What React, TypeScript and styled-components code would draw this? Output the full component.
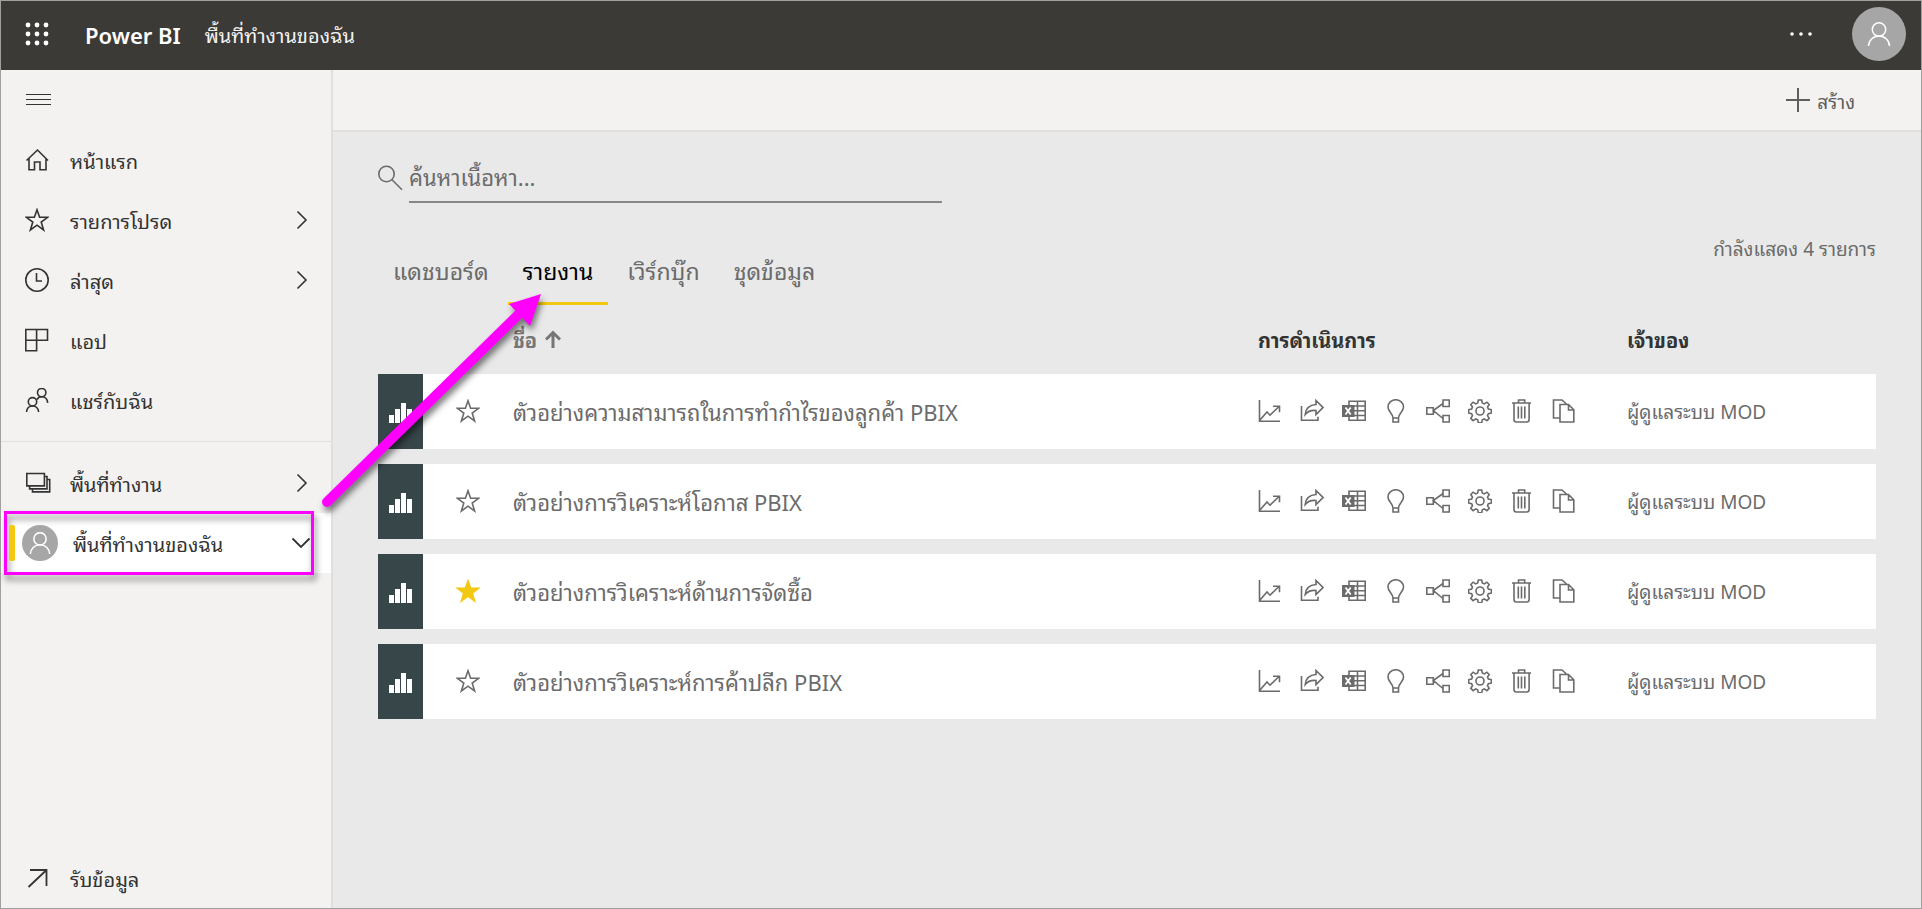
import React from "react";
import styled, { createGlobalStyle } from "styled-components";

const GlobalStyle = createGlobalStyle`
  *, *::before, *::after { box-sizing: border-box; }
  body {
    margin: 0;
    background: #e9e9e9;
    color: #333;
    font-family: "Noto Sans", "Noto Sans Thai Looped", "Loma", sans-serif;
    font-size: 20px;
    line-height: 28px;
  }
  button, input { font: inherit; color: inherit; }
  button { border: 0; padding: 0; background: none; cursor: pointer; }
  svg { display: block; flex: none; }
`;

const Page = styled.div`
  position: relative;
  min-height: 100vh;
  display: flex;
  flex-direction: column;
  border: 1px solid #a0a0a0;
`;

const Header = styled.header`
  display: flex;
  align-items: center;
  height: 69px;
  padding: 0 15px 3px 24px;
  background: #3b3a37;
  color: #fff;
`;

const Brand = styled.a`
  margin: 0 24px 0 36px;
  padding-top: 2px;
  color: #fff;
  font-size: 22px;
  font-weight: 600;
  text-decoration: none;
`;

const HeaderTitle = styled.span`
  flex: 1;
  padding-top: 3px;
  color: #f3f2f1;
`;

const IconButton = styled.button`
  display: flex;
  align-items: center;
  justify-content: center;
`;

const Avatar = styled.span<{ $size: number }>`
  display: flex;
  flex: none;
  align-items: center;
  justify-content: center;
  width: ${p => p.$size}px;
  height: ${p => p.$size}px;
  border-radius: 50%;
  background: #a6a6a6;
  color: #fff;
`;

const HeaderActions = styled.div`
  display: flex;
  align-items: center;
  gap: 39px;
`;

const Body = styled.div`
  flex: 1;
  display: flex;
`;

const Sidebar = styled.nav`
  flex: none;
  display: flex;
  flex-direction: column;
  width: 332px;
  border-right: 2px solid #e0dfde;
  background: #f3f2f1;
`;

const MenuButton = styled(IconButton)`
  width: 75px;
  height: 60px;
`;

const NavLink = styled.a<{ $active?: boolean }>`
  position: relative;
  display: flex;
  align-items: center;
  height: 60px;
  padding: 0 ${p => (p.$active ? 20 : 23)}px 0 ${p => (p.$active ? 21 : 24)}px;
  background: ${p => (p.$active ? "#fff" : "none")};
  color: #333;
  text-decoration: none;
  ${p => p.$active && `
    &::before {
      content: "";
      position: absolute;
      z-index: 2;
      left: 8px;
      top: 12px;
      width: 6px;
      height: 36px;
      border-radius: 2px;
      background: #f2c811;
    }
  `}
`;

const NavIcon = styled.span<{ $wide?: boolean }>`
  display: flex;
  width: ${p => (p.$wide ? 51 : 45)}px;
`;

const NavLabel = styled.span`
  flex: 1;
  padding-top: 3px;
`;

const NavGroup = styled.div<{ $bordered?: boolean }>`
  padding: ${p => (p.$bordered ? "11px 0 0" : "0 0 11px")};
  ${p => p.$bordered && "border-top: 1px solid #e0dfde;"}
`;

const NavFooter = styled.div`
  margin-top: auto;
`;

const Callout = styled.span`
  position: absolute;
  z-index: 1;
  left: 3px;
  top: -2px;
  right: 17px;
  height: 64px;
  border: 3px solid #ff00ff;
  filter: drop-shadow(2px 5px 3px rgba(0, 0, 0, 0.5));
  pointer-events: none;
`;

const Main = styled.main`
  flex: 1;
  min-width: 0;
`;

const Toolbar = styled.div`
  display: flex;
  align-items: center;
  justify-content: flex-end;
  height: 62px;
  padding-right: 66px;
  border-bottom: 2px solid #e0dfde;
  background: #f3f2f1;
`;

const CreateButton = styled.button`
  display: flex;
  align-items: center;
  gap: 6px;
  color: #605e5c;
  font-size: 19px;
`;

const CreateLabel = styled.span`
  padding-top: 3px;
`;

const Content = styled.div`
  padding: 26px 45px 0;
`;

const Search = styled.label`
  display: flex;
  gap: 6px;
  width: 564px;
  max-width: 100%;
  color: #6b6b6b;
  svg { margin-top: 7px; }
`;

const SearchInput = styled.input`
  flex: 1;
  min-width: 0;
  height: 45px;
  padding: 0 0 5px;
  border: 0;
  border-bottom: 2px solid #858886;
  outline: 0;
  background: none;
  font-size: 22px;
  &::placeholder { color: #6b6b6b; opacity: 1; }
`;

const TabRow = styled.div`
  display: flex;
  align-items: flex-start;
  justify-content: space-between;
  margin-top: 32px;
`;

const Tabs = styled.div`
  display: flex;
  gap: 4px;
`;

const Tab = styled.button<{ $active?: boolean }>`
  height: 70px;
  padding: 16px 15px 11px;
  border-bottom: 3px solid ${p => (p.$active ? "#f2c811" : "transparent")};
  color: ${p => (p.$active ? "#000" : "#6b6b6b")};
  font-size: 23px;
  line-height: 40px;
`;

const Count = styled.span`
  color: #6b6b6b;
  font-size: 19px;
`;

const Table = styled.table`
  width: 100%;
  table-layout: fixed;
  border-collapse: separate;
  border-spacing: 0 15px;
  margin-top: 4px;
`;

const Col = styled.col<{ $w?: number }>`
  ${p => p.$w && `width: ${p.$w}px;`}
`;

const HeadCell = styled.th<{ $muted?: boolean }>`
  height: 35px;
  padding: 3px 0 0;
  text-align: left;
  vertical-align: top;
  font-weight: 700;
  color: ${p => (p.$muted ? "#767676" : "#333")};
`;

const SortButton = styled.button`
  display: flex;
  align-items: center;
  gap: 8px;
  font-weight: 700;
  svg { margin-bottom: 5px; }
`;

const Cell = styled.td<{ $size?: number }>`
  height: 75px;
  padding: 0;
  background: #fff;
  color: #6b6b6b;
  font-size: ${p => p.$size || 19}px;
`;

const TypeCell = styled(Cell)`
  background: #374649;
  color: #fff;
  svg { margin: 2px auto 0; }
`;

const StarButton = styled(IconButton)<{ $on?: boolean }>`
  width: 100%;
  padding-bottom: 2px;
  color: ${p => (p.$on ? "#f2c811" : "#6b6b6b")};
`;

const ReportLink = styled.a`
  color: inherit;
  text-decoration: none;
`;

const Actions = styled.div`
  display: flex;
  gap: 18px;
  padding-bottom: 2px;
`;

const Arrow = styled.svg`
  position: absolute;
  z-index: 2;
  left: 310px;
  top: 280px;
  overflow: visible;
  filter: drop-shadow(2px 5px 3px rgba(0, 0, 0, 0.5));
  pointer-events: none;
`;

type IconProps = { w?: number; h?: number; sw?: number; fill?: string; children: React.ReactNode };
const Icon = ({ w = 24, h = 24, sw = 1.6, fill = "none", children }: IconProps) => (
  <svg width={w} height={h} viewBox={`0 0 ${w} ${h}`} fill={fill} stroke="currentColor" strokeWidth={sw} aria-hidden="true">
    {children}
  </svg>
);

const Waffle = () => (
  <svg width="24" height="24" viewBox="0 0 24 24" fill="currentColor" aria-hidden="true">
    {[3, 12, 21].map(y => [3, 12, 21].map(x => <circle key={`${x}-${y}`} cx={x} cy={y} r="2.4" />))}
  </svg>
);

const Person = ({ size }: { size: number }) => (
  <svg width={size} height={size} viewBox="0 0 24 24" fill="none" stroke="currentColor" strokeWidth={size > 22 ? 1.5 : 1.7} aria-hidden="true">
    <circle cx="12" cy="7.5" r="6.7" />
    <path d="M1.5 24a10.5 10 0 0 1 21 0" />
  </svg>
);

const ChevronRight = () => <Icon w={12} h={20}><path d="M1.5 1.5 10 10l-8.5 8.5" /></Icon>;
const ChevronDown = () => <Icon w={20} h={12} sw={1.8}><path d="M1.5 1.5 10 10l8.5-8.5" /></Icon>;
const Plus = () => <Icon w={26} h={26} sw={2}><path d="M1 13h24M13 1v24" /></Icon>;
const starPath = "M12 1.8 14.6 9.3H22.6L16.2 14 18.6 22 12 17.2 5.4 22 7.8 14 1.4 9.3H9.4Z";

const HomeIcon = () => <Icon><path d="M1.500 12.500 12.500 2 23 12.500M4 10.500v11.300h5.500V14h5.500v7.800h6V10.500" /></Icon>;
const StarIcon = () => <Icon><path d={starPath} /></Icon>;
const ClockIcon = () => <Icon><circle cx="12" cy="12" r="11.2" /><path d="M11.5 5v8H17" /></Icon>;
const AppsIcon = () => <Icon><path d="M.8 1.5h21.7v10.800H.8zM.8 1.500v21.300h10.800V1.500" /></Icon>;
const SharedIcon = () => (
  <Icon>
    <circle cx="7.5" cy="13.800" r="4.200" /><circle cx="16.700" cy="4.600" r="4.200" />
    <path d="M1.500 24c.4-4 3-6 6-6s5.700 2 6.200 6M12 11.500c1-1.800 2.700-2.700 4.700-2.700 3 0 5.600 2 6 6" />
  </Icon>
);
const WorkspacesIcon = () => <Icon w={27}><path d="M1.800 2.500h17.600v12.400H1.800zM19.400 5.500h2.600v12.400H4.600v-3M22 8.500h2.700v12.400H7.500v-3" /></Icon>;
const GetDataIcon = () => <Icon sw={1.8}><path d="M5 4h16.500v16M21.500 4 3.500 21" /></Icon>;
const SearchIcon = () => <Icon w={25} h={26}><circle cx="8.500" cy="9" r="7.700" /><path d="M14 14.700 24 24.700" /></Icon>;
const SortIcon = () => <Icon w={16} h={18} sw={3}><path d="M8 18V2M1 9.500l7-7 7 7" /></Icon>;
const BarsIcon = () => (
  <svg width="24" height="20" viewBox="0 0 24 20" fill="currentColor" aria-hidden="true">
    <path d="M0 12h5v8H0zM6 6h5v14H6zM12 0h5v20h-5zM18 6h5v14h-5z" />
  </svg>
);

const actionIcons: { label: string; icon: React.ReactNode }[] = [
  { label: "ดูเมตริกการใช้งาน", icon: <Icon><path d="M1.500 1v21.200H22M2 21 9 13l3 3.200L21 7.500M15 7.200h6.500v6" /></Icon> },
  { label: "แชร์", icon: <Icon><path d="M1.500 7v14.200h16.500v-3.500M16 1.500l7 7-7 7v-4c-4.500-.5-8 .5-10.800 4C5.700 9.500 9.500 6 16 5.500z" /></Icon> },
  { label: "วิเคราะห์ใน Excel", icon: (
    <Icon>
      <path d="M7 6V2.200h16.200v19H7V17M12 7h11M12 11.700h11M12 16.500h11M15.500 2v19" />
      <path d="M0 6h12.500v12H0z" fill="currentColor" stroke="none" />
      <path d="m3.500 8.500 5.200 7M8.700 8.500l-5.200 7" stroke="#fff" strokeWidth="1.800" />
    </Icon>
  ) },
  { label: "ข้อมูลเชิงลึก", icon: <Icon><path d="M9 19c0-4.500-5-6-5-11a7.700 7.200 0 0 1 15.500 0c0 5-5 6.500-5 11v4H9zM9 19h5.500" /></Icon> },
  { label: "ดูข้อมูลที่เกี่ยวข้อง", icon: <Icon><path d="M.8 8.700h6.500v6.500H.8zM17 1h6.300v6.500H17zM17 16.500h6.300V23H17zM17 4.500 7.300 11.500 17 19.500" /></Icon> },
  { label: "การตั้งค่า", icon: (
    <Icon>
      <circle cx="12" cy="12" r="4" />
      <path d="M10.300 1h3.400l.6 3 2 .9 2.600-1.700 2.300 2.300-1.700 2.600.9 2 3 .6v3.400l-3 .6-.9 2 1.700 2.600-2.300 2.300-2.600-1.700-2 .9-.6 3h-3.400l-.6-3-2-.9-2.600 1.700-2.300-2.300 1.700-2.600-.9-2-3-.6v-3.400l3-.6.9-2-1.700-2.600 2.300-2.300 2.600 1.700 2-.9z" />
    </Icon>
  ) },
  { label: "ลบ", icon: <Icon><path d="M2 4h19M8.500 4V1h6.200v3M4 4v16.500q0 2.500 2.300 2.500h10.500q2.300 0 2.300-2.500V4M8.300 7.500v12M11.500 7.500v12M14.800 7.500v12" /></Icon> },
  { label: "คัดลอก", icon: <Icon><path d="M7.500 19H1.500V1h8.500l5 4.500M8 5.500h8.500l5.300 5.300V23H8zM16.500 5.500V11h5.300" /></Icon> },
];

const navItems = [
  { label: "หน้าแรก", icon: <HomeIcon /> },
  { label: "รายการโปรด", icon: <StarIcon />, more: true },
  { label: "ล่าสุด", icon: <ClockIcon />, more: true },
  { label: "แอป", icon: <AppsIcon /> },
  { label: "แชร์กับฉัน", icon: <SharedIcon /> },
];

const tabs = ["แดชบอร์ด", "รายงาน", "เวิร์กบุ๊ก", "ชุดข้อมูล"];

const reports = [
  { name: "ตัวอย่างความสามารถในการทำกำไรของลูกค้า PBIX", starred: false },
  { name: "ตัวอย่างการวิเคราะห์โอกาส PBIX", starred: false },
  { name: "ตัวอย่างการวิเคราะห์ด้านการจัดซื้อ", starred: true },
  { name: "ตัวอย่างการวิเคราะห์การค้าปลีก PBIX", starred: false },
];

export default function App() {
  return (
    <Page>
      <GlobalStyle />
      <Header>
        <IconButton aria-label="ตัวเปิดใช้แอป"><Waffle /></IconButton>
        <Brand href="#">Power BI</Brand>
        <HeaderTitle>พื้นที่ทำงานของฉัน</HeaderTitle>
        <HeaderActions>
          <IconButton aria-label="เพิ่มเติม">
            <svg width="24" height="6" viewBox="0 0 24 6" fill="currentColor" aria-hidden="true">
              <circle cx="3" cy="3" r="1.800" /><circle cx="12" cy="3" r="1.800" /><circle cx="21" cy="3" r="1.800" />
            </svg>
          </IconButton>
          <IconButton aria-label="บัญชี"><Avatar $size={54}><Person size={24} /></Avatar></IconButton>
        </HeaderActions>
      </Header>
      <Body>
        <Sidebar>
          <NavGroup>
            <MenuButton aria-label="เมนู">
              <Icon w={25} h={14} sw={1}><path d="M0 1.500h25M0 6.500h25M0 11.500h25" /></Icon>
            </MenuButton>
            {navItems.map(item => (
              <NavLink key={item.label} href="#">
                <NavIcon>{item.icon}</NavIcon>
                <NavLabel>{item.label}</NavLabel>
                {item.more && <ChevronRight />}
              </NavLink>
            ))}
          </NavGroup>
          <NavGroup $bordered>
            <NavLink href="#">
              <NavIcon><WorkspacesIcon /></NavIcon>
              <NavLabel>พื้นที่ทำงาน</NavLabel>
              <ChevronRight />
            </NavLink>
            <NavLink href="#" $active>
              <NavIcon $wide><Avatar $size={36}><Person size={22} /></Avatar></NavIcon>
              <NavLabel>พื้นที่ทำงานของฉัน</NavLabel>
              <ChevronDown />
              <Callout />
            </NavLink>
          </NavGroup>
          <NavFooter>
            <NavLink href="#">
              <NavIcon><GetDataIcon /></NavIcon>
              <NavLabel>รับข้อมูล</NavLabel>
            </NavLink>
          </NavFooter>
        </Sidebar>
        <Main>
          <Toolbar>
            <CreateButton><Plus /><CreateLabel>สร้าง</CreateLabel></CreateButton>
          </Toolbar>
          <Content>
            <Search>
              <SearchIcon />
              <SearchInput type="text" aria-label="ค้นหาเนื้อหา" placeholder="ค้นหาเนื้อหา..." />
            </Search>
            <TabRow>
              <Tabs role="tablist">
                {tabs.map((t, i) => <Tab key={t} role="tab" aria-selected={i === 1} $active={i === 1}>{t}</Tab>)}
              </Tabs>
              <Count>กำลังแสดง 4 รายการ</Count>
            </TabRow>
            <Table>
              <colgroup><Col $w={45} /><Col $w={90} /><Col /><Col $w={369} /><Col $w={249} /></colgroup>
              <thead>
                <tr>
                  <HeadCell /><HeadCell />
                  <HeadCell $muted><SortButton>ชื่อ<SortIcon /></SortButton></HeadCell>
                  <HeadCell>การดำเนินการ</HeadCell>
                  <HeadCell>เจ้าของ</HeadCell>
                </tr>
              </thead>
              <tbody>
                {reports.map(r => (
                  <tr key={r.name}>
                    <TypeCell><BarsIcon /></TypeCell>
                    <Cell>
                      <StarButton $on={r.starred} aria-label="รายการโปรด">
                        <Icon fill={r.starred ? "currentColor" : "none"}><path d={starPath} /></Icon>
                      </StarButton>
                    </Cell>
                    <Cell $size={22}><ReportLink href="#">{r.name}</ReportLink></Cell>
                    <Cell>
                      <Actions>
                        {actionIcons.map(a => <IconButton key={a.label} aria-label={a.label}>{a.icon}</IconButton>)}
                      </Actions>
                    </Cell>
                    <Cell>ผู้ดูแลระบบ MOD</Cell>
                  </tr>
                ))}
              </tbody>
            </Table>
          </Content>
        </Main>
      </Body>
      <Arrow width="240" height="230" viewBox="0 0 240 230" aria-hidden="true">
        <path d="M16 221 209 32" stroke="#ff00ff" strokeWidth="10" strokeLinecap="round" />
        <path d="M230 13 198 23 219 45Z" fill="#ff00ff" />
      </Arrow>
    </Page>
  );
}
